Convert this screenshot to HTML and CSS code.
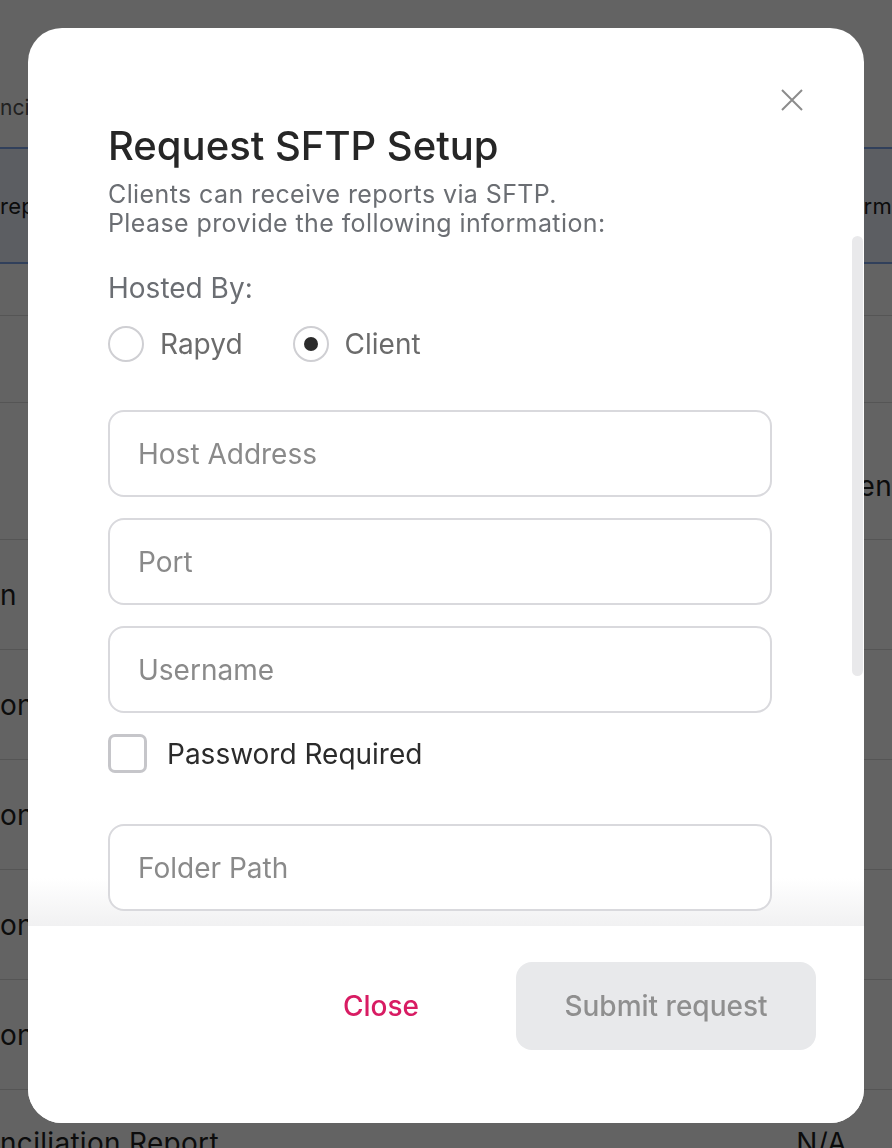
FILE: index.html
```html
<!DOCTYPE html>
<html lang="en">
  <head>
    <meta charset="UTF-8" />
    <meta name="viewport" content="width=device-width, initial-scale=1.0" />
    <title>Reports - Request SFTP Setup</title>
    <link rel="stylesheet" href="styles.css">
  </head>
  <body>
    <div class="page">
      <div class="page-title">nciliation</div>
      <div class="report-table">
        <div class="table-row table-head">
          <div class="cell-left">report</div>
          <div class="cell-right">Platform</div>
        </div>
        <div class="table-row row-sm">
          <div class="cell-left"></div>
          <div class="cell-right"></div>
        </div>
        <div class="table-row row-md">
          <div class="cell-left"></div>
          <div class="cell-right"></div>
        </div>
        <div class="table-row row-lg">
          <div class="cell-left"></div>
          <div class="cell-right cell-low">Open</div>
        </div>
        <div class="table-row">
          <div class="cell-left">n</div>
          <div class="cell-right"></div>
        </div>
        <div class="table-row">
          <div class="cell-left">on</div>
          <div class="cell-right"></div>
        </div>
        <div class="table-row">
          <div class="cell-left">on</div>
          <div class="cell-right"></div>
        </div>
        <div class="table-row">
          <div class="cell-left">on</div>
          <div class="cell-right"></div>
        </div>
        <div class="table-row">
          <div class="cell-left">on</div>
          <div class="cell-right"></div>
        </div>
        <div class="table-row row-last">
          <div class="cell-left">nciliation Report</div>
          <div class="cell-right cell-na">N/A</div>
        </div>
      </div>
    </div>

    <div class="overlay">
      <div class="modal">
        <button class="modal-close" aria-label="Close">
          <svg width="24" height="24" viewBox="0 0 24 24" fill="none" stroke="#8c8c8c" stroke-width="2">
            <path d="M2 2L22 22M22 2L2 22" />
          </svg>
        </button>

        <div class="modal-header">
          <h2>Request SFTP Setup</h2>
          <p>Clients can receive reports via SFTP.<br />Please provide the following information:</p>
        </div>

        <div class="modal-body">
          <div class="scroll-thumb"></div>

          <div class="field-label">Hosted By:</div>
          <div class="radio-group">
            <label class="radio">
              <input type="radio" name="hosted" value="rapyd" />
              Rapyd
            </label>
            <label class="radio">
              <input type="radio" name="hosted" value="client" checked />
              Client
            </label>
          </div>

          <div class="fields">
            <input class="text-input" type="text" placeholder="Host Address" />
            <input class="text-input" type="text" placeholder="Port" />
            <input class="text-input" type="text" placeholder="Username" />
          </div>

          <label class="checkbox">
            <input type="checkbox" />
            Password Required
          </label>

          <div class="fields">
            <input class="text-input" type="text" placeholder="Folder Path" />
            <input class="text-input" type="text" placeholder="File Name Pattern" />
            <input class="text-input" type="text" placeholder="Contact Email" />
          </div>
        </div>

        <div class="modal-footer">
          <button class="btn-link">Close</button>
          <button class="btn-submit" disabled>Submit request</button>
        </div>
      </div>
    </div>
  </body>
</html>
```

FILE: styles.css
```css
* {
  box-sizing: border-box;
}
body {
  margin: 0;
  height: 1148px;
  overflow: hidden;
  font-family: Inter, "Noto Sans", sans-serif;
  background-color: #fff;
  color: #1f1f1f;
}

/* page behind the dialog */
.page-title {
  margin-top: 92px;
  line-height: 32px;
  font-size: 21px;
  color: #555;
}
.report-table {
  margin-top: 23px;
}
.table-row {
  display: flex;
  justify-content: space-between;
  align-items: center;
  height: 110px;
  border-bottom: 1px solid #dcdcdc;
  font-size: 28px;
  letter-spacing: 0.3px;
}
.table-head {
  height: 117px;
  font-size: 22px;
  background-color: #ecf2fb;
  border-top: 2px solid #7fa4ea;
  border-bottom: 2px solid #7fa4ea;
}
.row-sm {
  height: 52px;
}
.row-md {
  height: 87px;
}
.row-lg {
  height: 137px;
}
.row-last {
  align-items: flex-start;
  padding-top: 36px;
}
.cell-low {
  padding-top: 30px;
}
.cell-na {
  padding-right: 45px;
}

/* dialog */
.overlay {
  position: fixed;
  inset: 0;
  background-color: rgba(0, 0, 0, 0.61);
  display: flex;
  justify-content: center;
  padding-top: 28px;
}
.modal {
  position: relative;
  width: 836px;
  height: 1095px;
  background-color: #fff;
  border-radius: 34px;
  display: flex;
  flex-direction: column;
  overflow: hidden;
}
.modal-close {
  position: absolute;
  top: 60px;
  right: 60px;
  width: 24px;
  height: 24px;
  padding: 0;
  border: none;
  background: none;
  cursor: pointer;
}
.modal-header {
  height: 208px;
  flex-shrink: 0;
  padding: 94px 80px 0;
}
.modal-header h2 {
  margin: 0;
  font-size: 40px;
  line-height: 48px;
  font-weight: 500;
  color: #262626;
}
.modal-header p {
  margin: 10px 0 0;
  font-size: 25px;
  line-height: 29px;
  letter-spacing: 0.4px;
  color: #6b6e73;
}

.modal-body {
  position: relative;
  flex: 1;
  overflow: hidden;
  padding: 36px 92px 43px 80px;
  background: linear-gradient(to bottom, rgba(255, 255, 255, 0) calc(100% - 48px), #f1f1f2);
}
.scroll-thumb {
  position: absolute;
  top: 0;
  right: 1px;
  width: 11px;
  height: 440px;
  border-radius: 6px;
  background-color: #e9e9eb;
}
.field-label {
  font-size: 28px;
  line-height: 32px;
  color: #6b6e73;
}
.radio-group {
  display: flex;
  gap: 50px;
  margin-top: 22px;
}
.radio {
  display: flex;
  align-items: center;
  gap: 16px;
  font-size: 28px;
  line-height: 36px;
  color: #6b6b6b;
}
.radio input {
  appearance: none;
  margin: 0;
  width: 36px;
  height: 36px;
  border: 2px solid #cfcfd3;
  border-radius: 50%;
  display: grid;
  place-items: center;
}
.radio input:checked::after {
  content: "";
  width: 14px;
  height: 14px;
  border-radius: 50%;
  background-color: #2b2b2b;
}
.fields {
  display: flex;
  flex-direction: column;
  gap: 21px;
  margin-top: 48px;
}
.text-input {
  height: 87px;
  padding: 0 28px;
  border: 2px solid #d9d9dd;
  border-radius: 16px;
  background-color: #fff;
  font-family: inherit;
  font-size: 28px;
  color: #262626;
}
.text-input::placeholder {
  color: #8a8a8a;
}
.checkbox {
  display: flex;
  align-items: center;
  gap: 20px;
  margin-top: 21px;
  font-size: 28px;
  color: #2b2b2b;
}
.checkbox input {
  appearance: none;
  margin: 0;
  width: 39px;
  height: 39px;
  border: 3px solid #c6c6ca;
  border-radius: 7px;
}
.checkbox + .fields {
  margin-top: 51px;
}

.modal-footer {
  flex-shrink: 0;
  display: flex;
  justify-content: flex-end;
  align-items: center;
  gap: 57px;
  padding: 36px 48px 73px;
  background-color: #fff;
}
.btn-link {
  padding: 0 40px;
  border: none;
  background: none;
  font-family: inherit;
  font-size: 28px;
  font-weight: 500;
  color: #d81c63;
  cursor: pointer;
}
.btn-submit {
  width: 300px;
  height: 88px;
  border: none;
  border-radius: 16px;
  background-color: #e8e9eb;
  font-family: inherit;
  font-size: 28px;
  font-weight: 500;
  color: #8f8f8f;
}
```
